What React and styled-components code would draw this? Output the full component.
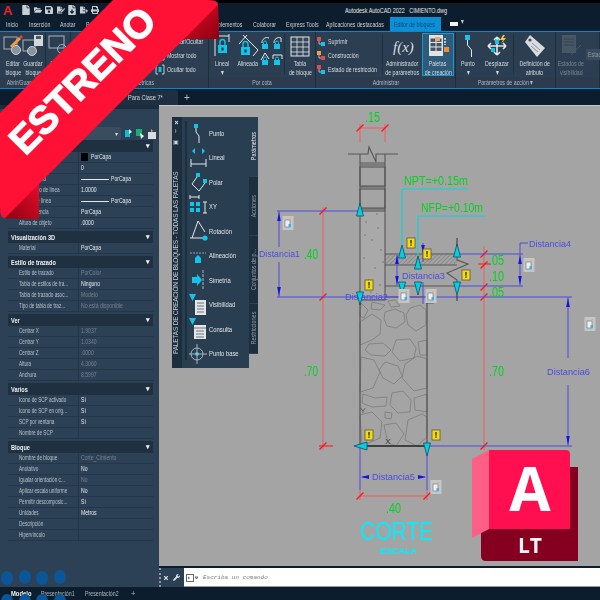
import styled, { createGlobalStyle } from "styled-components";
import { FaFile, FaFolderOpen, FaSave, FaPrint, FaFileSignature, FaFileDownload, FaFileExport, FaTimes, FaWrench } from "react-icons/fa";

const GlobalStyle = createGlobalStyle`
  html, body { margin: 0; padding: 0; background: #0c1e2d; }
  body { font-family: "Liberation Sans", Arial, sans-serif; }
`;

const Page = styled.div`
  position: relative;
  width: 600px;
  height: 600px;
  overflow: hidden;
`;

// the capture is soft, everything under the badge and the logo is a bit blurred
const Screen = styled.div`
  width: 600px;
  height: 600px;
  display: flex;
  flex-direction: column;
  background: #0c1e2d;
  filter: blur(0.35px);
`;

// the whole capture is squeezed sideways, so text is too
const Narrow = styled.span`
  display: inline-block;
  white-space: nowrap;
  transform: scaleX(${(p) => p.$x || 0.7});
  transform-origin: ${(p) => p.$o || "left"} center;
`;

const TitleBar = styled.div`
  height: 17px;
  display: flex;
  align-items: center;
  border-top: 3px solid #000;
  box-sizing: border-box;
  color: #e8eaec;
  font-size: 7.5px;
`;

const AppLetter = styled.span`
  width: 22px;
  padding-left: 3px;
  box-sizing: border-box;
  color: #e8202a;
  font-size: 13px;
  font-weight: bold;
  line-height: 13px;
`;

const QuickIcons = styled.div`
  width: 323px;
  display: flex;
  gap: 3.5px;
  color: #c9ced2;

  svg {
    width: 8px;
    height: 10px;
  }
`;

const TabBar = styled.div`
  height: 14px;
  display: flex;
  align-items: stretch;
  padding-left: 6px;
  color: #c7ced4;
  font-size: 7.5px;
`;

const TabItem = styled.div`
  width: ${(p) => p.$w}px;
  display: flex;
  align-items: center;
  background: ${(p) => (p.$active ? "#0b8fd6" : "transparent")};
  color: ${(p) => (p.$active ? "#0d4a70" : "inherit")};
  padding-left: ${(p) => (p.$active ? 4 : 0)}px;
  box-sizing: border-box;
`;

const TabChip = styled.span`
  width: 8px;
  height: 4px;
  margin: 5px 3px 0 9px;
  background: #f2f2f2;
`;

const Ribbon = styled.div`
  height: 58px;
  display: flex;
  background: #2c3f52;
  border-top: 1px solid #0a86cc;
  border-bottom: 1px solid #0a86cc;
  box-sizing: border-box;
`;

const RibbonPanel = styled.div`
  width: ${(p) => p.$w}px;
  display: flex;
  flex-direction: column;
  border-right: 1px solid #1c2d3c;
  box-sizing: border-box;
  color: ${(p) => (p.$dim ? "#76848f" : "#d5dce2")};
`;

const PanelBody = styled.div`
  flex: 1;
  display: flex;
  align-items: flex-start;
  padding: 2px 0 0 ${(p) => p.$pad || 0}px;
  font-size: 7.5px;
  line-height: 9px;
`;

const PanelLabel = styled.div`
  height: 12px;
  display: flex;
  align-items: center;
  justify-content: center;
  background: #2a3c4e;
  color: #aeb9c3;
  font-size: 7.5px;
`;

const Tool = styled.div`
  width: ${(p) => p.$w}px;
  flex-shrink: 0;
  display: flex;
  flex-direction: column;
  align-items: center;
`;

const ToolBox = styled(Tool)`
  height: 42px;
  background: #2f5a78;
  outline: 1px solid #0f9bd8;
  outline-offset: -1px;
  margin-top: -1px;
  padding-top: 1px;
`;

const ToolIcon = styled.svg`
  width: 24px;
  height: 23px;
  margin-bottom: 2px;
  flex-shrink: 0;
`;

const ToolList = styled.div`
  width: ${(p) => p.$w}px;
  flex-shrink: 0;
  display: flex;
  flex-direction: column;
  gap: 2px;
  padding-top: 1px;
`;

const ToolRow = styled.div`
  height: 12px;
  display: flex;
  align-items: center;
  gap: 2px;
`;

const RowIcon = styled.svg`
  width: 10px;
  height: 11px;
  flex-shrink: 0;
`;

const MiniGrid = styled.div`
  width: 24px;
  flex-shrink: 0;
  display: grid;
  grid-template-columns: 12px 12px;
  gap: 3px 0;
  padding-top: 3px;
`;

const Spacer = styled.div`
  width: ${(p) => p.$w}px;
  flex-shrink: 0;
`;

const Rule = styled.div`
  width: 1px;
  height: 40px;
  flex-shrink: 0;
  background: #1f3041;
`;

const DimField = styled.div`
  margin-top: 15px;
  padding: 1px 2px;
  background: #3a4c5e;
  color: #8c99a4;
`;

const DocBar = styled.div`
  height: 16px;
  display: flex;
  padding-left: 115px;
  align-items: flex-end;
  color: #d2d8dd;
  font-size: 7.5px;
`;

const DocTab = styled.div`
  width: 63px;
  height: 15px;
  display: flex;
  align-items: center;
  justify-content: space-between;
  padding: 0 4px 0 13px;
  box-sizing: border-box;
  background: #1d2f40;
  border-radius: 2px 2px 0 0;
`;

const DocPlus = styled.span`
  margin: 0 0 2px 6px;
  font-size: 10px;
  color: #b9c2ca;
`;

const Work = styled.div`
  flex: 1;
  min-height: 0;
  display: flex;
`;

const Props = styled.div`
  width: 159px;
  flex-shrink: 0;
  background: #2c4156;
  padding-left: 8px;
  box-sizing: border-box;
  border-top: 4px solid #1b2d3d;
`;

const PropsHead = styled.div`
  height: 31px;
  display: flex;
  align-items: flex-end;
  gap: 2px;
`;

const Combo = styled.div`
  width: 113px;
  height: 13px;
  background: #3a4d60;
  border-radius: 2px;
  display: flex;
  justify-content: flex-end;
  align-items: center;
  padding-right: 3px;
  box-sizing: border-box;
  color: #d8dde2;
  font-size: 6px;
`;

const HeadIcon = styled.svg`
  width: 8px;
  height: 11px;
  flex-shrink: 0;
  margin: 0 1px 1px;
`;

const Section = styled.section`
  width: 145px;
  margin-bottom: 2px;
`;

const SectionHead = styled.div`
  height: 12px;
  background: #1f3040;
  display: flex;
  align-items: center;
  justify-content: space-between;
  padding: 0 3px;
  box-sizing: border-box;
  color: #eef1f3;
  font-size: 7px;
  font-weight: bold;
`;

const Row = styled.div`
  height: 11px;
  display: grid;
  grid-template-columns: 70px 1fr;
  border-bottom: 1px solid #24374a;
  box-sizing: border-box;
  font-size: 7.5px;
  line-height: 10px;
`;

const RowName = styled.div`
  padding-left: 11px;
  color: #b4c0ca;
  overflow: visible;
`;

const RowValue = styled.div`
  display: flex;
  align-items: center;
  gap: 2px;
  padding-left: 2px;
  border-left: 1px solid #24374a;
  color: ${(p) => (p.$dim ? "#73828f" : "#e4e8eb")};
`;

const Swatch = styled.span`
  width: 7px;
  height: 8px;
  background: #000;
  margin-right: 1px;
`;

const LineSample = styled.span`
  width: ${(p) => p.$w}px;
  height: 1px;
  background: #e8e8e8;
`;

const Main = styled.div`
  flex: 1;
  min-width: 0;
  display: flex;
  flex-direction: column;
`;

const Canvas = styled.div`
  position: relative;
  flex: 1;
  min-height: 0;
  background: #a4a4a4;
  border-top: 1px solid #c4c8cc;
  margin-bottom: 2px;
`;

const Drawing = styled.svg`
  display: block;
  width: 441px;
  height: 460px;
`;

const CommandBar = styled.div`
  height: 19px;
  display: flex;
  background: #0f2130;
`;

const CommandTools = styled.div`
  width: 25px;
  flex-shrink: 0;
  display: flex;
  align-items: center;
  gap: 4px;
  padding-left: 2px;
  box-sizing: border-box;
  background: #2b4055;
  color: #e6e6e6;
  font-size: 7px;
  border-left: 2px dotted #8d98a2;
`;

const CommandInput = styled.div`
  flex: 1;
  display: flex;
  align-items: center;
  gap: 5px;
  padding-left: 2px;
  background: #fff;
  border-bottom: 1px solid #9a9a9a;
  color: #7c7c7c;
  font: italic 6px "Liberation Mono", monospace;
`;

const StatusBar = styled.div`
  height: 13px;
  display: flex;
  align-items: center;
  background: #0c1e2d;
  color: #aeb8c0;
  font-size: 7.5px;
  padding-left: 11px;
`;

const StatusTab = styled.div`
  width: ${(p) => p.$w}px;
  color: ${(p) => (p.$on ? "#f2f4f5" : "inherit")};
  font-weight: ${(p) => (p.$on ? "bold" : "normal")};
`;

const Palette = styled.div`
  position: absolute;
  left: 13px;
  top: 11px;
  width: 86px;
  height: 251px;
  display: flex;
`;

const PaletteStrip = styled.div`
  width: 8px;
  flex-shrink: 0;
  display: flex;
  flex-direction: column;
  align-items: center;
  background: #1d2f3f;
  color: #cfd6dc;
  font-size: 6px;
  padding-top: 3px;
  box-sizing: border-box;
  gap: 3px;
`;

const StripTitle = styled.div`
  flex: 1;
  writing-mode: vertical-rl;
  transform: rotate(180deg);
  font-size: 6.5px;
  letter-spacing: -0.18px;
  white-space: nowrap;
  color: #c3ccd3;
  line-height: 8px;
  padding-top: 14px;
`;

const PaletteBody = styled.div`
  position: relative;
  width: 69px;
  flex-shrink: 0;
  display: flex;
  flex-direction: column;
  background: #2a3e52;
  border-left: 2px solid #1d2f3f;
  padding: 4px 0 0 7px;
  box-sizing: border-box;
  color: #dfe4e8;
  font-size: 7.5px;

  &::before {
    content: "";
    position: absolute;
    left: 3px;
    top: 4px;
    bottom: 8px;
    width: 2px;
    background: #1d2f3f;
  }
`;

const PaletteItem = styled.div`
  height: 24.5px;
  flex-shrink: 0;
  display: flex;
  align-items: center;
`;

const PaletteIcon = styled.svg`
  width: 20px;
  height: 24px;
  flex-shrink: 0;
  margin-right: 0;
`;

const PaletteTabs = styled.div`
  width: 9px;
  flex-shrink: 0;
  display: flex;
  flex-direction: column;
`;

const PaletteTab = styled.div`
  height: ${(p) => p.$h}px;
  flex-shrink: 0;
  display: flex;
  align-items: center;
  justify-content: center;
  background: ${(p) => (p.$on ? "#2a3e52" : "#1d2f3f")};
  color: ${(p) => (p.$on ? "#e6eaed" : "#8e9ba6")};
  border-bottom: 1px solid #2f4254;
  box-sizing: border-box;
  font-size: 7px;
`;

const TabText = styled.span`
  writing-mode: vertical-rl;
  transform: rotate(180deg) scaleY(0.78);
  white-space: nowrap;
  line-height: 9px;
`;

const Bullet = styled.span`
  position: absolute;
  left: ${(p) => p.$x}px;
  top: ${(p) => p.$y}px;
  width: 12px;
  height: 14px;
  border-radius: 50%;
  background: #0a5699;
`;

const Overlay = styled.svg`
  position: absolute;
  left: ${(p) => p.$x}px;
  top: ${(p) => p.$y}px;
`;

const WHITE = "#e4e6e8";
const CYAN = "#14c4e8";
const GRAY = "#aab2b9";

const CANVAS_BLUE = "#4c4ce0";
const CANVAS_RED = "#f25a5a";
const TICK = "#ff1414";
const GREEN = "#00d41e";
const LEAD = "#00d8e0";
const CAD = "#565656";

const ribbonIcons = {
  edit: (
    <>
      <rect x="3" y="3" width="13" height="12" fill="none" stroke={GRAY} />
      <circle cx="15" cy="16" r="4.5" fill="#8a949c" stroke="#ccd" />
      <path d="M9 12l9-9 2 2-9 9z" fill="#f0a040" />
      <path d="M18 3l2-2 2 2-2 2z" fill="#e04050" />
    </>
  ),
  save: (
    <>
      <rect x="2" y="6" width="12" height="11" fill="none" stroke={GRAY} />
      <rect x="13" y="1" width="9" height="11" fill="#d5d8da" />
      <rect x="15" y="2" width="5" height="3" fill="#4a5864" />
      <circle cx="11" cy="17" r="4.5" fill="#8a949c" stroke="#ccd" />
    </>
  ),
  test: (
    <>
      <rect x="3" y="2" width="15" height="12" fill="none" stroke={GRAY} />
      <circle cx="16" cy="15" r="4.5" fill="none" stroke={GRAY} />
    </>
  ),
  linear: (
    <>
      <path d="M5 2h14M5 2v20" fill="none" stroke={WHITE} />
      <path d="M19 0v8" stroke={WHITE} />
      <rect x="8" y="11" width="9" height="8" fill={CYAN} />
      <path d="M10 11V8a2.5 2.5 0 0 1 5 0v3" fill="none" stroke={CYAN} strokeWidth="1.4" />
      <rect x="11.5" y="13.5" width="2" height="3" fill="#123" />
    </>
  ),
  aligned: (
    <>
      <path d="M7 1l15 15M3 10l8-9M22 16l-5 6" fill="none" stroke={WHITE} />
      <rect x="5" y="13" width="9" height="8" fill={CYAN} />
      <path d="M7 13v-3a2.5 2.5 0 0 1 5 0v3" fill="none" stroke={CYAN} strokeWidth="1.4" />
      <rect x="8.5" y="15.5" width="2" height="3" fill="#123" />
    </>
  ),
  table: (
    <>
      <rect x="3" y="3" width="18" height="19" fill="#34485a" stroke={WHITE} />
      <path d="M3 8h18M3 13h18M3 18h18M9 3v19M15 3v19" stroke={WHITE} strokeWidth="0.8" />
    </>
  ),
  palettes: (
    <>
      <rect x="3" y="1" width="14" height="21" fill="#dfe3e6" />
      {[4.5, 9, 13.5].map((y) =>
        [4.5, 10.5].map((x) => <rect key={`${x}-${y}`} x={x} y={y} width="5" height="3.4" fill="#43535f" />)
      )}
      <rect x="9" y="3" width="5" height="4" fill="#f2a46a" />
      <rect x="18" y="13" width="5" height="5" fill="#ef8f3c" />
      <path d="M19 4v7" stroke="#e6e6e6" strokeDasharray="2 1" strokeWidth="1.5" />
    </>
  ),
  point: (
    <>
      <rect x="9" y="1" width="5" height="5" fill={CYAN} />
      <path d="M11.5 6v5l4 5v7" fill="none" stroke={WHITE} />
    </>
  ),
  move: (
    <>
      <path d="M12 3v18M3 12h18M12 3l-3 3M12 3l3 3M12 21l-3-3M12 21l3-3M3 12l3-3M3 12l3 3M21 12l-3-3M21 12l-3 3" stroke={WHITE} strokeWidth="1.6" fill="none" />
      <rect x="10" y="6" width="4" height="4" fill={CYAN} />
      <rect x="6" y="14" width="4" height="4" fill={CYAN} />
      <path d="M18 1l-3 5h3l-2 4 5-6h-3l2-3z" fill="#f5d020" />
    </>
  ),
  tag: (
    <>
      <path d="M7 1l15 13-8 9L2 8z" fill="#d8dcdf" />
      <circle cx="7" cy="6" r="1.6" fill="#3a4c5c" />
      <path d="M9 9l8 7M8 12l7 6" stroke="#8a949c" />
    </>
  ),
  states: (
    <>
      <rect x="3" y="1" width="14" height="18" fill="#5a6874" />
      <path d="M5 5h10M5 8h10M5 11h10" stroke="#3a4856" />
      <path d="M12 21l10-10" stroke="#5a6874" />
    </>
  ),
};

function BigTool({ w, icon, lines, dim }) {
  return (
    <Tool $w={w}>
      <ToolIcon viewBox="0 0 24 23" style={dim ? { opacity: 0.6 } : undefined}>{ribbonIcons[icon]}</ToolIcon>
      {lines.map((l) => (
        <Narrow key={l} $o="center">{l}</Narrow>
      ))}
    </Tool>
  );
}

function ListTool({ label, a, b, bracket }) {
  return (
    <ToolRow>
      <RowIcon viewBox="0 0 10 11">
        {bracket ? (
          <>
            <path d="M3 1H1v9h2M7 1h2v9H7" stroke={WHITE} strokeWidth="0.8" fill="none" />
            <rect x="3.6" y="3" width="2.8" height="5" fill={CYAN} />
          </>
        ) : (
          <>
            <rect x="1" y="1" width="4" height="4" fill={a} />
            <rect x="5" y="6" width="4" height="4" fill={b} />
            <path d="M3 5v3h2" stroke={WHITE} strokeWidth="0.7" fill="none" />
          </>
        )}
      </RowIcon>
      <Narrow>{label}</Narrow>
    </ToolRow>
  );
}

function MiniLock({ d }) {
  return (
    <svg width="11" height="13" viewBox="0 0 11 13">
      <path d={d} fill="none" stroke={WHITE} />
      <rect x="2" y="7" width="6" height="5" fill={CYAN} />
      <path d="M3.5 7V5.5a1.5 1.5 0 0 1 3 0V7" fill="none" stroke={CYAN} />
    </svg>
  );
}

const sections = [
  {
    title: "General",
    rows: [
      ["Color", "PorCapa", "swatch"],
      ["Capa", "0"],
      ["Tipo de línea", "PorCapa", "line"],
      ["Escala tipo de línea", "1.0000"],
      ["Grosor de línea", "PorCapa", "line"],
      ["Transparencia", "PorCapa"],
      ["Altura de objeto", ".0000"],
    ],
  },
  { title: "Visualización 3D", rows: [["Material", "PorCapa"]] },
  {
    title: "Estilo de trazado",
    rows: [
      ["Estilo de trazado", "PorColor", "dim"],
      ["Tabla de estilos de tra...", "Ninguno"],
      ["Tabla de trazado asoc...", "Modelo", "dim"],
      ["Tipo de tabla de traz...", "No está disponible", "dim"],
    ],
  },
  {
    title: "Ver",
    rows: [
      ["Centrar X", "1.9037", "dim"],
      ["Centrar Y", "1.0340", "dim"],
      ["Centrar Z", ".0000", "dim"],
      ["Altura", "4.3060", "dim"],
      ["Anchura", "8.5997", "dim"],
    ],
  },
  {
    title: "Varios",
    rows: [
      ["Icono de SCP activado", "Sí"],
      ["Icono de SCP en orig...", "Sí"],
      ["SCP por ventana", "Sí"],
      ["Nombre de SCP", ""],
    ],
  },
  {
    title: "Bloque",
    rows: [
      ["Nombre de bloque", "Corte_Cimiento", "dim"],
      ["Anotativo", "No"],
      ["Igualar orientación c...", "No", "dim"],
      ["Aplicar escala uniforme", "No"],
      ["Permitir  descomposic...", "Sí"],
      ["Unidades", "Metros"],
      ["Descripción", ""],
      ["Hipervínculo", ""],
    ],
  },
];

const paletteIcons = {
  Punto: (
    <>
      <rect x="5" y="3" width="4" height="4" fill={CYAN} />
      <path d="M7 7v4l3 4v7" fill="none" stroke={WHITE} />
    </>
  ),
  Lineal: (
    <>
      <path d="M3 5l3-3v6zM16 5l-3-3v6z" fill={CYAN} />
      <path d="M2 13v8M17 13v8M2 18h15" stroke={WHITE} fill="none" />
    </>
  ),
  Polar: (
    <>
      <rect x="7" y="3" width="4" height="4" fill={CYAN} />
      <rect x="14" y="9" width="4" height="4" fill={CYAN} />
      <path d="M8 7l-5 7 7 7 6-8M3 14" fill="none" stroke={WHITE} />
    </>
  ),
  XY: (
    <>
      <path d="M1 2h9M1 0v4M10 0v4" stroke={WHITE} fill="none" />
      <rect x="1" y="7" width="4" height="4" fill={CYAN} />
      <rect x="7" y="7" width="4" height="4" fill={CYAN} />
      <rect x="1" y="13" width="4" height="4" fill={CYAN} />
      <rect x="7" y="13" width="4" height="4" fill={CYAN} />
      <path d="M14 7h4M14 18h4M16 7v11" stroke={WHITE} fill="none" />
    </>
  ),
  Rotación: (
    <>
      <path d="M1 19h14M9 2L3 19M9 2l7 11" fill="none" stroke={WHITE} />
      <circle cx="16" cy="19" r="2.6" fill={CYAN} />
    </>
  ),
  Alineación: (
    <>
      <path d="M1 9h16" stroke="#93a0aa" strokeDasharray="2 1" />
      <path d="M9 11l3 3v5H6v-5z" fill={CYAN} />
    </>
  ),
  Simetría: (
    <>
      <path d="M3 9h5V6l5 6-5 6v-3H3z" fill={CYAN} />
      <path d="M14 2v20" stroke={GRAY} strokeDasharray="3 1" />
    </>
  ),
  Visibilidad: (
    <>
      <path d="M0 1h7l-3.5 7z" fill={CYAN} />
      <rect x="6" y="7" width="11" height="15" fill="#e4e6e8" />
      <path d="M8 10h7M8 13h7M8 16h7M8 19h7" stroke="#6a747c" />
    </>
  ),
  Consulta: (
    <>
      <path d="M0 1h7l-3.5 7z" fill={CYAN} />
      <rect x="5" y="8" width="12" height="14" fill="#e4e6e8" />
      <path d="M5 11h12M7 14h8M7 17h8M7 20h8" stroke="#6a747c" />
    </>
  ),
  "Punto base": (
    <>
      <circle cx="8" cy="12" r="6" fill="none" stroke={GRAY} />
      <circle cx="8" cy="12" r="2" fill={CYAN} />
      <path d="M8 2v20M-2 12h20" stroke={GRAY} />
    </>
  ),
};

const stones = [
  "361,303 368,310 364,318 360,316",
  "372,302 385,305 380,310 371,309",
  "388,301 395,300 400,306 391,307",
  "385,312 395,309 404,313 405,322 396,328 387,326 384,319",
  "410,308 420,305 426,310 426,325 416,331 408,325 406,315",
  "360,322 372,314 381,320 380,334 372,340 360,345",
  "369,344 383,343 391,350 385,356 371,355 365,350",
  "396,340 410,339 416,348 414,358 400,361 392,352",
  "418,342 427,340 427,355 420,355",
  "361,357 374,360 380,372 373,388 360,392",
  "385,362 398,366 402,376 394,384 383,378 379,370",
  "405,364 417,356 427,359 427,388 414,391 402,378",
  "363,394 375,398 387,397 386,406 372,407 362,403",
  "392,393 403,391 411,400 410,412 398,413 390,405",
  "414,398 427,394 427,412 415,410",
  "360,415 372,412 382,422 380,438 362,446",
  "384,425 396,423 404,434 396,446 388,443",
  "385,412 392,413 391,419 385,418",
  "408,420 422,414 427,417 427,437 417,446 405,440",
];

const grains = [
  [366, 222], [378, 228], [372, 240], [381, 250], [364, 258], [375, 268], [369, 280], [380, 285], [365, 235], [377, 214], [383, 262], [371, 292],
];

function Tri({ x, y, dir = "up" }) {
  const pts = {
    up: `${x - 3.5},${y + 6} ${x + 3.5},${y + 6} ${x},${y - 7}`,
    down: `${x - 3.5},${y - 6} ${x + 3.5},${y - 6} ${x},${y + 7}`,
    left: `${x + 7},${y - 4} ${x + 7},${y + 4} ${x - 6},${y}`,
  }[dir];
  return <polygon points={pts} fill="#00cfe8" stroke="#0d5060" strokeWidth="0.8" />;
}

function Warn({ x, y }) {
  return (
    <g>
      <rect x={x - 4} y={y - 5} width="8" height="10" fill="#f7dc00" stroke="#555" strokeWidth="0.8" />
      <rect x={x - 0.7} y={y - 3} width="1.4" height="3.6" fill="#333" />
      <rect x={x - 0.7} y={y + 1.4} width="1.4" height="1.4" fill="#333" />
    </g>
  );
}

function Param({ x, y }) {
  return (
    <g>
      <rect x={x - 5.5} y={y - 7} width="11" height="14" fill="#c6c6c6" />
      <rect x={x - 3} y={y - 3} width="5" height="7" fill="#eef0f2" stroke="#5a7080" strokeWidth="0.6" />
      <path d={`M${x + 1} ${y - 3}l1.5-2`} stroke="#f0a040" strokeWidth="1" />
      <rect x={x + 0.5} y={y + 1} width="2.5" height="3" fill="#3fb0d8" />
    </g>
  );
}

function Tick({ x, y }) {
  return <line x1={x - 3.5} y1={y + 3.5} x2={x + 3.5} y2={y - 3.5} stroke={TICK} strokeWidth="1.3" />;
}

function Label({ x, y, w, children, fill = CANVAS_BLUE, size = 9, anchor = "start", weight }) {
  return (
    <text x={x} y={y} fontSize={size} fill={fill} textAnchor={anchor} fontWeight={weight} textLength={w} lengthAdjust="spacingAndGlyphs">
      {children}
    </text>
  );
}

function BlueArrow({ x, y, dir }) {
  const p = dir === "up" ? `${x - 1.8},${y + 9} ${x + 1.8},${y + 9} ${x},${y}` : `${x - 1.8},${y - 9} ${x + 1.8},${y - 9} ${x},${y}`;
  return <polygon points={p} fill="#1414e0" />;
}

function Sketch() {
  return (
    <Drawing viewBox="159 106 441 460">
      <defs>
        <pattern id="hatch" width="3" height="3" patternUnits="userSpaceOnUse" patternTransform="rotate(45)">
          <line x1="0" y1="0" x2="0" y2="3" stroke="#6a6a6a" strokeWidth="0.9" />
        </pattern>
      </defs>

      {/* wall and foundation */}
      <g fill="none" stroke={CAD} strokeWidth="1.1">
        <path d="M348 154H368L369 147L376 162V154H398" />
        <path d="M360 154V211M385 154V211M360 163H385M360 165H385" />
        <rect x="360" y="167" width="25" height="19" />
        <rect x="360" y="189" width="25" height="19" />
        <path d="M360 187H385M360 209H385" />
        <rect x="360" y="211" width="25" height="89" fill="#a9a9a9" />
        <path d="M385 254H457V260L468 264L447 273L457 280V286H385M385 265H457M385 297H427" />
        <rect x="385" y="254" width="72" height="11" fill="url(#hatch)" stroke="none" />
      </g>
      {grains.map(([x, y]) => (
        <circle key={`${x}-${y}`} cx={x} cy={y} r="0.7" fill="#666" />
      ))}

      <g fill="none" stroke="#7c7c7c" strokeWidth="0.8">
        {stones.map((s) => (
          <polygon key={s} points={s} />
        ))}
      </g>
      <path d="M360 300V446H427V297" fill="none" stroke={CAD} strokeWidth="1.3" />
      <path d="M360 446H427" stroke="#333" strokeWidth="1.3" />
      <Label x={388} y={444} w={6} fill="#3c3c3c" size={8} anchor="middle">X</Label>
      <Label x={363} y={413} w={6} fill="#555" size={8} anchor="middle">Y</Label>

      {/* red dimensions */}
      <g stroke={CANVAS_RED} strokeWidth="1" fill="none">
        <path d="M360 124V142M385 124V142M360 128H385" />
        <path d="M323 207V450" />
        <path d="M484 246V450" />
        <path d="M360 490V500M427 490V500M360 496H427" />
        <path d="M478 264H490" stroke={TICK} />
        <path d="M319 446H333" stroke={TICK} />
      </g>
      {[[360, 128], [385, 128], [323, 211], [323, 297], [323, 446], [484, 254], [484, 265], [484, 287], [484, 297], [360, 496], [427, 496], [484, 446]].map(([x, y]) => (
        <Tick key={`${x}-${y}`} x={x} y={y} />
      ))}

      {/* blue parameters */}
      <g stroke={CANVAS_BLUE} strokeWidth="1" fill="none">
        <path d="M277 211H360M277 297H572M279 211V247M279 262V297" />
        <path d="M457 254H523M457 286H523M520 254V243H528M520 254V286" />
        <path d="M568 297V358M568 385V446M427 446H572" />
        <path d="M360 446V490M427 446V490M362 477H367M420 477H425" />
        <path d="M397 255V285M423 243V262M423 282V304" />
      </g>
      <BlueArrow x={279} y={212} dir="up" />
      <BlueArrow x={279} y={296} dir="down" />
      <BlueArrow x={520} y={255} dir="up" />
      <BlueArrow x={520} y={285} dir="down" />
      <BlueArrow x={568} y={298} dir="up" />
      <BlueArrow x={568} y={445} dir="down" />
      <BlueArrow x={397} y={255} dir="up" />
      <BlueArrow x={397} y={285} dir="down" />
      <BlueArrow x={423} y={254} dir="down" />
      <polygon points="361,477 369,475 369,479" fill="#1414e0" />
      <polygon points="426,477 418,475 418,479" fill="#1414e0" />

      <g style={{ fontFamily: '"Liberation Sans", sans-serif' }}>
        <Label x={259} y={257} w={41}>Distancia1</Label>
        <Label x={345} y={300} w={43}>Distancia2</Label>
        <Label x={402} y={279} w={43}>Distancia3</Label>
        <Label x={529} y={247} w={42}>Distancia4</Label>
        <Label x={372} y={480} w={43}>Distancia5</Label>
        <Label x={547} y={375} w={43}>Distancia6</Label>

        <Label x={365} y={122} w={15} fill={GREEN} size={14}>.15</Label>
        <Label x={304} y={259} w={14} fill={GREEN} size={14}>.40</Label>
        <Label x={304} y={376} w={14} fill={GREEN} size={14}>.70</Label>
        <Label x={489} y={265} w={15} fill={GREEN} size={14}>.05</Label>
        <Label x={489} y={281} w={15} fill={GREEN} size={14}>.10</Label>
        <Label x={489} y={297} w={15} fill={GREEN} size={14}>.05</Label>
        <Label x={489} y={376} w={15} fill={GREEN} size={14}>.70</Label>
        <Label x={386} y={513} w={15} fill={GREEN} size={14}>.40</Label>
        <Label x={404} y={185} w={64} fill={GREEN} size={13}>NPT=+0.15m</Label>
        <Label x={421} y={212} w={62} fill={GREEN} size={13}>NFP=+0.10m</Label>

        <Label x={360} y={540} w={73} fill="#00eeff" size={26}>CORTE</Label>
        <Label x={380} y={554} w={37} fill="#00f0ff" size={9.5} weight="bold">ESCALA</Label>
      </g>

      {/* level leaders */}
      <g stroke={LEAD} strokeWidth="1.1" fill="none">
        <path d="M402 245V189H468" />
        <path d="M418 262V216H486" />
      </g>

      <path d="M457 238V254M457 295V301" stroke="#333" fill="none" />
      <path d="M402 282V292" stroke="#333" />

      <Tri x={360} y={210} />
      <Tri x={360} y={298} dir="down" />
      <Tri x={402} y={252} />
      <Tri x={418} y={263} />
      <Tri x={457} y={251} />
      <Tri x={402} y={288} dir="down" />
      <Tri x={418} y={288} dir="down" />
      <Tri x={457} y={288} dir="down" />
      <Tri x={430} y={297} />
      <Tri x={360} y={446} dir="left" />
      <Tri x={427} y={449} dir="down" />

      <Warn x={411} y={243} />
      <Warn x={427} y={254} />
      <Warn x={466} y={275} />
      <Warn x={369} y={285} />
      <Warn x={369} y={435} />
      <Warn x={436} y={435} />

      <Param x={288} y={223} />
      <Param x={404} y={296} />
      <Param x={431} y={296} />
      <Param x={529} y={265} />
      <Param x={590} y={324} />
      <Param x={436} y={487} />
    </Drawing>
  );
}

function App() {
  return (
    <Page>
      <GlobalStyle />
      <Screen>
        <TitleBar>
          <AppLetter>A</AppLetter>
          <QuickIcons>
            <FaFile />
            <FaFolderOpen />
            <FaSave />
            <FaFileSignature />
            <FaFileDownload />
            <FaFileExport />
            <FaPrint />
          </QuickIcons>
          <Narrow $x={0.72}>Autodesk AutoCAD 2022&nbsp;&nbsp;&nbsp;CIMIENTO.dwg</Narrow>
        </TitleBar>

        <TabBar>
          <TabItem $w={23}><Narrow>Inicio</Narrow></TabItem>
          <TabItem $w={31}><Narrow>Inserción</Narrow></TabItem>
          <TabItem $w={26}><Narrow>Anotar</Narrow></TabItem>
          <TabItem $w={38}><Narrow>Paramétrico</Narrow></TabItem>
          <TabItem $w={20}><Narrow>Vista</Narrow></TabItem>
          <TabItem $w={34}><Narrow>Administrar</Narrow></TabItem>
          <TabItem $w={29}><Narrow>Salida</Narrow></TabItem>
          <TabItem $w={46}><Narrow>Complementos</Narrow></TabItem>
          <TabItem $w={33}><Narrow>Colaborar</Narrow></TabItem>
          <TabItem $w={40}><Narrow>Express Tools</Narrow></TabItem>
          <TabItem $w={64}><Narrow>Aplicaciones destacadas</Narrow></TabItem>
          <TabItem $w={51} $active><Narrow>Editor de bloques</Narrow></TabItem>
          <TabChip />
          <Narrow>▾</Narrow>
        </TabBar>

        <Ribbon>
          <RibbonPanel $w={46}>
            <PanelBody $pad={3}>
              <BigTool w={20} icon="edit" lines={["Editar", "bloque"]} />
              <BigTool w={20} icon="save" lines={["Guardar", "bloque"]} />
            </PanelBody>
            <PanelLabel><Narrow $o="center">Abrir/Guardar</Narrow></PanelLabel>
          </RibbonPanel>
          <RibbonPanel $w={25}>
            <PanelBody>
              <BigTool w={24} icon="test" lines={["Probar", "bloque"]} />
            </PanelBody>
            <PanelLabel><Narrow $o="center">Probar</Narrow></PanelLabel>
          </RibbonPanel>
          <RibbonPanel $w={138}>
            <PanelBody>
              <Spacer $w={84} />
              <ToolList $w={52}>
                <ListTool label="Mostrar/Ocultar" bracket />
                <ListTool label="Mostrar todo" bracket />
                <ListTool label="Ocultar todo" bracket />
              </ToolList>
            </PanelBody>
            <PanelLabel><Narrow $o="center">Geométricas</Narrow></PanelLabel>
          </RibbonPanel>
          <RibbonPanel $w={107}>
            <PanelBody>
              <BigTool w={26} icon="linear" lines={["Lineal", "▾"]} />
              <BigTool w={25} icon="aligned" lines={["Alineada"]} />
              <MiniGrid>
                <MiniLock d="M2 6a5 5 0 0 1 7-5" />
                <MiniLock d="M2 6a5 5 0 0 1 7-5M9 1v4" />
                <MiniLock d="M5 0L1 7M5 0l4 6" />
                <MiniLock d="M1 2h9M1 2v4M10 2v4" />
              </MiniGrid>
              <Rule />
              <BigTool w={30} icon="table" lines={["Tabla", "de bloque"]} />
            </PanelBody>
            <PanelLabel><Narrow $o="center">Por cota</Narrow></PanelLabel>
          </RibbonPanel>
          <RibbonPanel $w={140}>
            <PanelBody>
              <ToolList $w={66}>
                <ListTool label="Suprimir" a="#e04a50" b={CYAN} />
                <ListTool label="Construcción" a="#f0a040" b="#e04a50" />
                <ListTool label="Estado de restricción" a="#e04a50" b={CYAN} />
              </ToolList>
              <Rule />
              <Tool $w={39}>
                <ToolIcon viewBox="0 0 24 23">
                  <text x="2" y="18" fontFamily="Liberation Serif, serif" fontStyle="italic" fontSize="15" fill="#d8dde2">f(x)</text>
                </ToolIcon>
                <Narrow $o="center">Administrador</Narrow>
                <Narrow $o="center">de parámetros</Narrow>
              </Tool>
              <ToolBox $w={32}>
                <ToolIcon viewBox="0 0 24 23">{ribbonIcons.palettes}</ToolIcon>
                <Narrow $o="center">Paletas</Narrow>
                <Narrow $o="center">de creación</Narrow>
              </ToolBox>
            </PanelBody>
            <PanelLabel><Narrow $o="center">Administrar</Narrow></PanelLabel>
          </RibbonPanel>
          <RibbonPanel $w={100}>
            <PanelBody>
              <BigTool w={24} icon="point" lines={["Punto", "▾"]} />
              <BigTool w={33} icon="move" lines={["Desplazar", "▾"]} />
              <Rule />
              <BigTool w={42} icon="tag" lines={["Definición de", "atributo"]} />
            </PanelBody>
            <PanelLabel><Narrow $o="center">Parámetros de acción ▾</Narrow></PanelLabel>
          </RibbonPanel>
          <RibbonPanel $w={44} $dim>
            <PanelBody>
              <BigTool w={30} icon="states" lines={["Estados de", "visibilidad"]} dim />
              <DimField><Narrow>Estad</Narrow></DimField>
            </PanelBody>
            <PanelLabel />
          </RibbonPanel>
        </Ribbon>

        <DocBar>
          <DocTab>
            <Narrow $x={0.75}>Para Clase 7*</Narrow>
            <FaTimes size={6} />
          </DocTab>
          <DocPlus>+</DocPlus>
        </DocBar>

        <Work>
          <Props>
            <PropsHead>
              <Combo>▾</Combo>
              <HeadIcon viewBox="0 0 8 11"><rect x="1" y="2" width="5" height="7" fill="#14b8d8" /><path d="M5 1l3 3-3 2z" fill="#dff" /></HeadIcon>
              <HeadIcon viewBox="0 0 8 11"><rect x="0" y="1" width="6" height="7" fill="#18b070" /><path d="M4 5l4 3-3 3z" fill="#eee" /></HeadIcon>
              <HeadIcon viewBox="0 0 8 11"><rect x="0" y="4" width="8" height="7" fill="#d8dde0" /><path d="M3 1l2 2-2 1z" fill="#f0b040" /></HeadIcon>
            </PropsHead>
            {sections.map((s) => (
              <Section key={s.title}>
                <SectionHead>
                  <Narrow $x={0.8}>{s.title}</Narrow>
                  <span>▾</span>
                </SectionHead>
                {s.rows.map(([name, value, kind]) => (
                  <Row key={name}>
                    <RowName><Narrow $x={0.62}>{name}</Narrow></RowName>
                    <RowValue $dim={kind === "dim"}>
                      {kind === "swatch" && <Swatch />}
                      {kind === "line" && <LineSample $w={28} />}
                      <Narrow $x={0.68}>{value}</Narrow>
                    </RowValue>
                  </Row>
                ))}
              </Section>
            ))}
          </Props>

          <Main>
            <Canvas>
              <Sketch />
              <Palette>
                <PaletteStrip>
                  <FaTimes size={5} />
                  <span>⟊</span>
                  <span>▣</span>
                  <StripTitle>PALETAS DE CREACIÓN DE BLOQUES - TODAS LAS PALETAS</StripTitle>
                </PaletteStrip>
                <PaletteBody>
                  {Object.keys(paletteIcons).map((name) => (
                    <PaletteItem key={name}>
                      <PaletteIcon viewBox="0 0 20 24">{paletteIcons[name]}</PaletteIcon>
                      <Narrow $x={0.78}>{name}</Narrow>
                    </PaletteItem>
                  ))}
                </PaletteBody>
                <PaletteTabs>
                  <PaletteTab $h={60} $on><TabText>Parámetros</TabText></PaletteTab>
                  <PaletteTab $h={59}><TabText>Acciones</TabText></PaletteTab>
                  <PaletteTab $h={68}><TabText>Conjuntos de p...</TabText></PaletteTab>
                  <PaletteTab $h={50}><TabText>Restricciones</TabText></PaletteTab>
                </PaletteTabs>
              </Palette>
            </Canvas>
            <CommandBar>
              <CommandTools>
                <FaTimes size={6} />
                <FaWrench size={7} />
              </CommandTools>
              <CommandInput>
                <svg width="12" height="9" viewBox="0 0 12 9">
                  <rect x="0.5" y="1.5" width="7" height="7" fill="none" stroke="#666" />
                  <path d="M2 4l1.5 1L2 6M9 4h3l-1.5 2z" stroke="#666" fill="none" />
                </svg>
                Escriba un comando
              </CommandInput>
            </CommandBar>
          </Main>
        </Work>

        <StatusBar>
          <StatusTab $w={30} $on><Narrow $x={0.78}>Modelo</Narrow></StatusTab>
          <StatusTab $w={44}><Narrow>Presentación1</Narrow></StatusTab>
          <StatusTab $w={46}><Narrow>Presentación2</Narrow></StatusTab>
          <StatusTab $w={10}>+</StatusTab>
        </StatusBar>
      </Screen>

      {[[1, 571], [19, 570], [36, 571], [54, 570]].map(([x, y]) => (
        <Bullet key={x} $x={x} $y={y} />
      ))}
      {[[1, 594], [19, 594], [36, 594], [54, 594]].map(([x, y]) => (
        <Bullet key={x} $x={x} $y={y} />
      ))}

      {/* corner ribbon */}
      <Overlay $x={0} $y={0} width="224" height="224" viewBox="0 0 224 224">
        <defs>
          <linearGradient id="foldTop" x1="0.2" y1="0.2" x2="1" y2="1">
            <stop offset="0" stopColor="#d40a24" />
            <stop offset="1" stopColor="#8e0012" />
          </linearGradient>
          <linearGradient id="foldBottom" x1="0.9" y1="0.1" x2="0" y2="1">
            <stop offset="0" stopColor="#e00c28" />
            <stop offset="1" stopColor="#8e0012" />
          </linearGradient>
        </defs>
        <path d="M218 5Q219 20 219 39H180Z" fill="url(#foldTop)" />
        <path d="M5 218Q20 219 39 219V180Z" fill="url(#foldBottom)" />
        <path d="M113 0H207Q219 0 218 5L5 218Q0 219 0 207V113Z" fill="#ff1136" />
        <text x="82" y="80" transform="rotate(-45 82 80)" dy="14" textAnchor="middle" fontFamily="Liberation Sans, Arial, sans-serif" fontWeight="bold" fontSize="39" fill="#fff" stroke="#fff" strokeWidth="1.2">ESTRENO</text>
      </Overlay>

      {/* product logo */}
      <Overlay $x={470} $y={440} width="110" height="124" viewBox="470 440 110 124">
        <path d="M489 467H578V561H486Q481 561 481 556V529H489Z" fill="#850020" />
        <path d="M489 450H566Q570 450 570 454V529H489Z" fill="#ff0f4f" />
        <path d="M472 459L489 450V529L472 538Z" fill="#ff5f84" />
        <text x="530" y="511" textAnchor="middle" fontFamily="Open Sans, Liberation Sans, sans-serif" fontWeight="bold" fontSize="60" fill="#fff">A</text>
        <text x="530" y="553" textAnchor="middle" fontFamily="Open Sans, Liberation Sans, sans-serif" fontWeight="bold" fontSize="21" fill="#f4f4f4">LT</text>
      </Overlay>
    </Page>
  );
}

export default App;
